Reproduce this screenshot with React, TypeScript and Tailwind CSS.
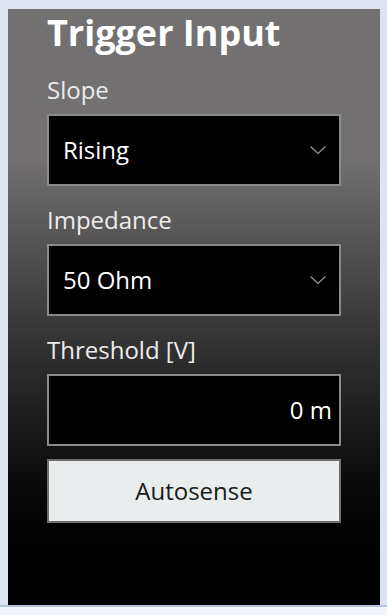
import React from "react";

function Chevron() {
    return (
        <svg width="18" height="10" viewBox="0 0 18 10" fill="none" className="shrink-0">
            <path d="M1.5 1.5 L9 8.5 L16.5 1.5" stroke="#9c9c9c" strokeWidth="1.1" />
        </svg>
    );
}

function FieldLabel({ children }: { children: React.ReactNode }) {
    return (
        <div className="mt-[18px] mb-[8px] h-[32px] text-[24px] leading-[32px] text-[#ececec]">
            {children}
        </div>
    );
}

function Select({ value }: { value: string }) {
    return (
        <div className="flex h-[72px] items-center justify-between border-2 border-[#8a8a8a] bg-black pl-[14px] pr-[12px] text-[24px] text-white">
            <span>{value}</span>
            <Chevron />
        </div>
    );
}

export default function App() {
    return (
        <div
            className="min-h-[615px] w-[387px] bg-[#dde4f0] pt-[9px]"
            style={{ fontFamily: '"Open Sans", "Noto Sans", sans-serif' }}
        >
            <div className="ml-[8px] flex h-[596px] w-[372px] flex-col bg-gradient-to-b from-[#727070] from-25% to-black px-[39px]">
                <h1 className="h-[47px] text-[36px] font-bold leading-[47px] text-white">
                    Trigger Input
                </h1>

                <FieldLabel>Slope</FieldLabel>
                <Select value="Rising" />

                <FieldLabel>Impedance</FieldLabel>
                <Select value="50 Ohm" />

                <FieldLabel>Threshold [V]</FieldLabel>
                <div className="flex h-[72px] items-center justify-end border-2 border-[#8a8a8a] bg-black pr-[7px] text-[24px] text-white">
                    0 m
                </div>

                <button className="mt-[13px] h-[64px] w-full border-2 border-[#6f6f6f] bg-[#e9eded] text-[24px] text-[#1a1a1a]">
                    Autosense
                </button>
            </div>
            <div className="h-[2px] bg-[#b4c4de]" />
            <div className="h-[8px] bg-[#f2f5fa]" />
        </div>
    );
}
